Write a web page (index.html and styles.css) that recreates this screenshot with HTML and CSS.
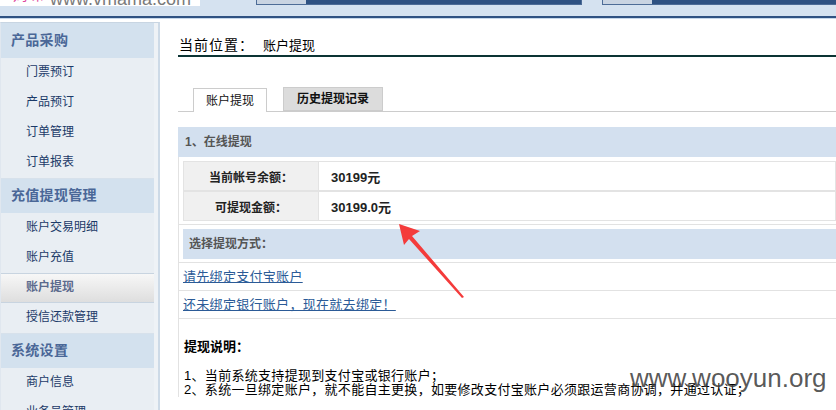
FILE: index.html
```html
<!DOCTYPE html>
<html lang="zh-CN">
<head>
    <meta charset="UTF-8">
    <title>账户提现</title>
    <link rel="stylesheet" href="styles.css">
</head>
<body>
    <div class="topbar">
        <div class="logo"><span class="logo-mark">妈咪</span><span class="logo-text">www.vmama.com</span></div>
        <div class="navbox navbox-first"><span class="navbox-tab"></span></div>
        <div class="navbox navbox-last"><span class="navbox-tab"></span></div>
    </div>

    <div class="page">
        <!-- 左侧菜单 -->
        <div class="sidebar">
            <div class="menu-title">产品采购</div>
            <a class="menu-item" href="#">门票预订</a>
            <a class="menu-item" href="#">产品预订</a>
            <a class="menu-item" href="#">订单管理</a>
            <a class="menu-item" href="#">订单报表</a>

            <div class="menu-title">充值提现管理</div>
            <a class="menu-item" href="#">账户交易明细</a>
            <a class="menu-item" href="#">账户充值</a>
            <a class="menu-item active" href="#">账户提现</a>
            <a class="menu-item" href="#">授信还款管理</a>

            <div class="menu-title">系统设置</div>
            <a class="menu-item" href="#">商户信息</a>
            <a class="menu-item" href="#">业务员管理</a>
        </div>

        <div class="main">
            <div class="crumb">当前位置：<span>账户提现</span></div>

            <div class="tabs">
                <span class="tab tab-on">账户提现</span>
                <span class="tab">历史提现记录</span>
            </div>

            <div class="section-title">1、在线提现</div>

            <div class="panel">
                <div class="balance">
                    <table class="info-table">
                        <tr>
                            <td class="label">当前帐号余额：</td>
                            <td class="value">30199元</td>
                        </tr>
                        <tr>
                            <td class="label">可提现金额：</td>
                            <td class="value">30199.0元</td>
                        </tr>
                    </table>
                </div>

                <div class="way-title">选择提现方式：</div>
                <div class="way-list">
                    <div class="way-row"><a href="#">请先绑定支付宝账户</a></div>
                    <div class="way-row"><a href="#">还未绑定银行账户，现在就去绑定！</a></div>
                </div>

                <div class="notes">
                    <div class="notes-title">提现说明：</div>
                    <div class="notes-text">
                        1、当前系统支持提现到支付宝或银行账户；<br>
                        2、系统一旦绑定账户，就不能自主更换，如要修改支付宝账户必须跟运营商协调，并通过认证；
                    </div>
                </div>
            </div>
        </div>
    </div>

    <svg class="arrow" width="836" height="410" viewBox="0 0 836 410">
        <polygon points="399,224 420,231 412,236 464,297 462,298 409,239 404,245" fill="#f43b3b"/>
    </svg>
    <div class="watermark">www.wooyun.org</div>
</body>
</html>
```

FILE: styles.css
```css
body {
    margin: 0;
    width: 836px;
    height: 410px;
    overflow: hidden;
    position: relative;
    background: #fff;
    color: #000;
    font-family: "Liberation Sans", "Noto Sans CJK SC", sans-serif;
    font-size: 12px;
}

/* 顶部条 */
.topbar {
    display: flex;
    align-items: flex-start;
    height: 16px;
    background: #d5e2f0;
    border-bottom: 2px solid #2f5282;
    box-shadow: 0 1px 0 #c6d7ea;
}

.logo {
    display: flex;
    align-items: flex-start;
    width: 200px;
    height: 6px;
    background: #fff;
    overflow: hidden;
}

.logo-mark {
    margin: -13px 0 0 13px;
    width: 30px;
    overflow: hidden;
    white-space: nowrap;
    font-size: 15px;
    line-height: 15px;
    color: #e0489c;
}

.logo-text {
    margin: -10px 0 0 7px;
    font-size: 18px;
    line-height: 18px;
    color: #7a7a7a;
    white-space: nowrap;
}

.navbox {
    display: flex;
    height: 5px;
    box-sizing: border-box;
    border: 1px solid #4d6c97;
    border-top: 0;
    background: #2f5282;
}

.navbox-first {
    margin-left: 56px;
    width: 326px;
}

.navbox-last {
    margin-left: 20px;
    flex: 1;
    border-right: 0;
}

.navbox-tab {
    width: 49px;
    background: #c9d4e2;
}

.page {
    display: flex;
    align-items: flex-start;
    margin-top: 4px;
}

/* 左侧菜单 */
.sidebar {
    width: 160px;
    flex-shrink: 0;
    box-sizing: border-box;
    padding-right: 4px;
    background: #eef2f6;
    border-top: 1px solid #c8d5e2;
    border-left: 1px solid #e0e7ef;
    border-right: 2px solid #cddae7;
}

.menu-title {
    height: 35px;
    box-sizing: border-box;
    line-height: 35px;
    padding-left: 10px;
    background: #d3e1ee;
    color: #4a6797;
    font-size: 14px;
    font-weight: bold;
    letter-spacing: 0.3px;
}

.menu-item + .menu-title {
    border-top: 1px solid #d7e1eb;
    line-height: 33px;
}

.menu-item {
    display: block;
    height: 30px;
    box-sizing: border-box;
    line-height: 28px;
    padding-left: 25px;
    background: #e9eef3;
    color: #1b3a68;
    text-decoration: none;
}

.menu-item.active {
    border-top: 1px solid #c8d4e0;
    border-bottom: 1px solid #c8d4e0;
    line-height: 26px;
    background: linear-gradient(#f7f7f7, #dedede);
    color: #5b6a8d;
    font-weight: bold;
}

/* 主区域 */
.main {
    flex: 1;
    min-width: 0;
    margin-left: 18px;
}

.crumb {
    padding: 16px 0 2px 1px;
    line-height: 15px;
    font-size: 14px;
    letter-spacing: 1px;
    border-bottom: 2px solid #0c3434;
}

.crumb span {
    margin-left: 9px;
    font-size: 13px;
    letter-spacing: 0;
}

.tabs {
    display: flex;
    align-items: flex-end;
    gap: 16px;
    margin-top: 30px;
    padding-left: 15px;
    border-bottom: 1px solid #cccccc;
}

.tab {
    height: 24px;
    box-sizing: border-box;
    line-height: 22px;
    padding: 0 13px;
    border: 1px solid #cccccc;
    background: #dcdcdc;
    font-weight: bold;
    color: #111;
}

.tab-on {
    padding: 0 12px;
    margin-bottom: -1px;
    border-bottom: 0;
    background: #fff;
    font-weight: normal;
    line-height: 24px;
}

.section-title {
    margin-top: 15px;
    height: 30px;
    line-height: 30px;
    padding-left: 7px;
    background: #d3e0ef;
    color: #555;
    font-weight: bold;
}

.panel {
    border-left: 1px solid #e2e2e2;
}

.balance {
    padding: 4px 0 3px 4px;
    border-bottom: 1px solid #e2e2e2;
}

.info-table {
    width: 100%;
    border-collapse: collapse;
    border: 1px solid #e3e3e3;
}

.info-table td {
    height: 28px;
    padding: 0;
    border: 1px solid #e3e3e3;
    font-weight: bold;
    color: #222;
}

.info-table tr + tr td {
    border-top-width: 2px;
}

.info-table .label {
    width: 134px;
    text-align: center;
    background: #f0f0f0;
}

.info-table .value {
    padding-left: 12px;
    font-size: 13px;
    background: #fff;
}

.way-title {
    margin: 4px 0 3px 4px;
    height: 30px;
    line-height: 30px;
    padding-left: 6px;
    background: #d3e0ef;
    color: #555;
    font-weight: bold;
}

.way-list {
    border-top: 1px solid #e2e2e2;
}

.way-row {
    height: 28px;
    box-sizing: border-box;
    line-height: 27px;
    padding-left: 4px;
    border-bottom: 1px solid #e2e2e2;
    font-size: 13px;
    letter-spacing: 0.3px;
}

.way-row a {
    color: #2b5b97;
    text-decoration: underline;
}

.notes {
    padding: 20px 0 0 5px;
    font-size: 13px;
}

.notes-title {
    line-height: 15px;
    font-weight: bold;
}

.notes-text {
    margin-top: 15px;
    line-height: 14px;
    letter-spacing: 0.3px;
    white-space: nowrap;
}

/* 截图上的标注 */
.arrow {
    position: absolute;
    top: 0;
    left: 0;
    pointer-events: none;
}

.watermark {
    position: absolute;
    left: 630px;
    top: 365px;
    font-size: 26px;
    line-height: 26px;
    color: rgba(60, 60, 60, 0.85);
    pointer-events: none;
}
```
